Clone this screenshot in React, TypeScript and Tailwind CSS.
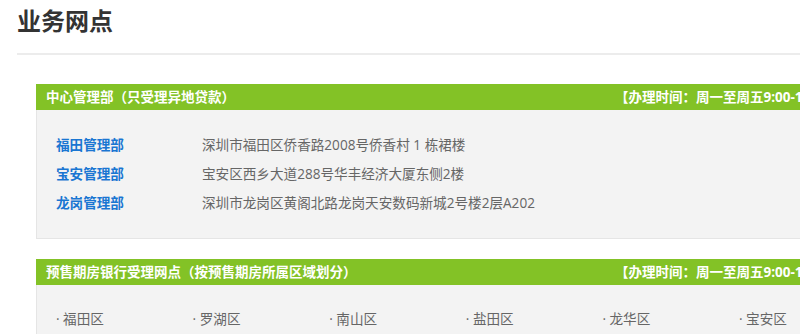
const centers = [
  { name: '福田管理部', addr: '深圳市福田区侨香路2008号侨香村 1 栋裙楼' },
  { name: '宝安管理部', addr: '宝安区西乡大道288号华丰经济大厦东侧2楼' },
  { name: '龙岗管理部', addr: '深圳市龙岗区黄阁北路龙岗天安数码新城2号楼2层A202' },
]

const districts = ['福田区', '罗湖区', '南山区', '盐田区', '龙华区', '宝安区', '龙岗区', '光明区']

const font = { fontFamily: '"Open Sans", "Noto Sans CJK SC", sans-serif' }

function SectionHeader({ title }: { title: string }) {
  return (
    <div className="h-[26px] bg-[#83c226] flex items-center justify-between pl-[10px] pr-[10px] text-[13.5px] font-bold text-white">
      <span>{title}</span>
      <span>【办理时间：周一至周五9:00-17:00】</span>
    </div>
  )
}

export default function App() {
  return (
    <div className="w-[800px] h-[334px] overflow-hidden bg-white" style={font}>
      <div className="pl-[17px] pt-[4px]">
        <h1 className="text-[24px] leading-[34px] font-bold text-[#333]">业务网点</h1>
        <div className="mt-[15px] h-[2px] w-[900px] bg-[#ececec]" />

        <div className="ml-[19px] mt-[29px] w-[817px]">
          <SectionHeader title="中心管理部（只受理异地贷款）" />
          <div className="bg-[#f3f3f3] border-l border-b border-[#e5e5e5] pl-[19px] pt-[21px] pb-[20px]">
            {centers.map(c => (
              <div key={c.name} className="flex h-[29px] items-center text-[13.6px]">
                <span className="w-[146px] font-bold text-[#1a76d2]">{c.name}</span>
                <span className="text-[#666]">{c.addr}</span>
              </div>
            ))}
          </div>

          <div className="mt-[20px]">
            <SectionHeader title="预售期房银行受理网点（按预售期房所属区域划分）" />
            <div className="bg-[#f3f3f3] border-l border-[#e5e5e5] pl-[19px] pt-[20px] pb-[20px] grid grid-cols-[repeat(6,136.6px)]">
              {districts.map(d => (
                <div key={d} className="h-[29px] flex items-center text-[13.6px] text-[#666]">
                  · {d}
                </div>
              ))}
            </div>
          </div>
        </div>
      </div>
    </div>
  )
}
